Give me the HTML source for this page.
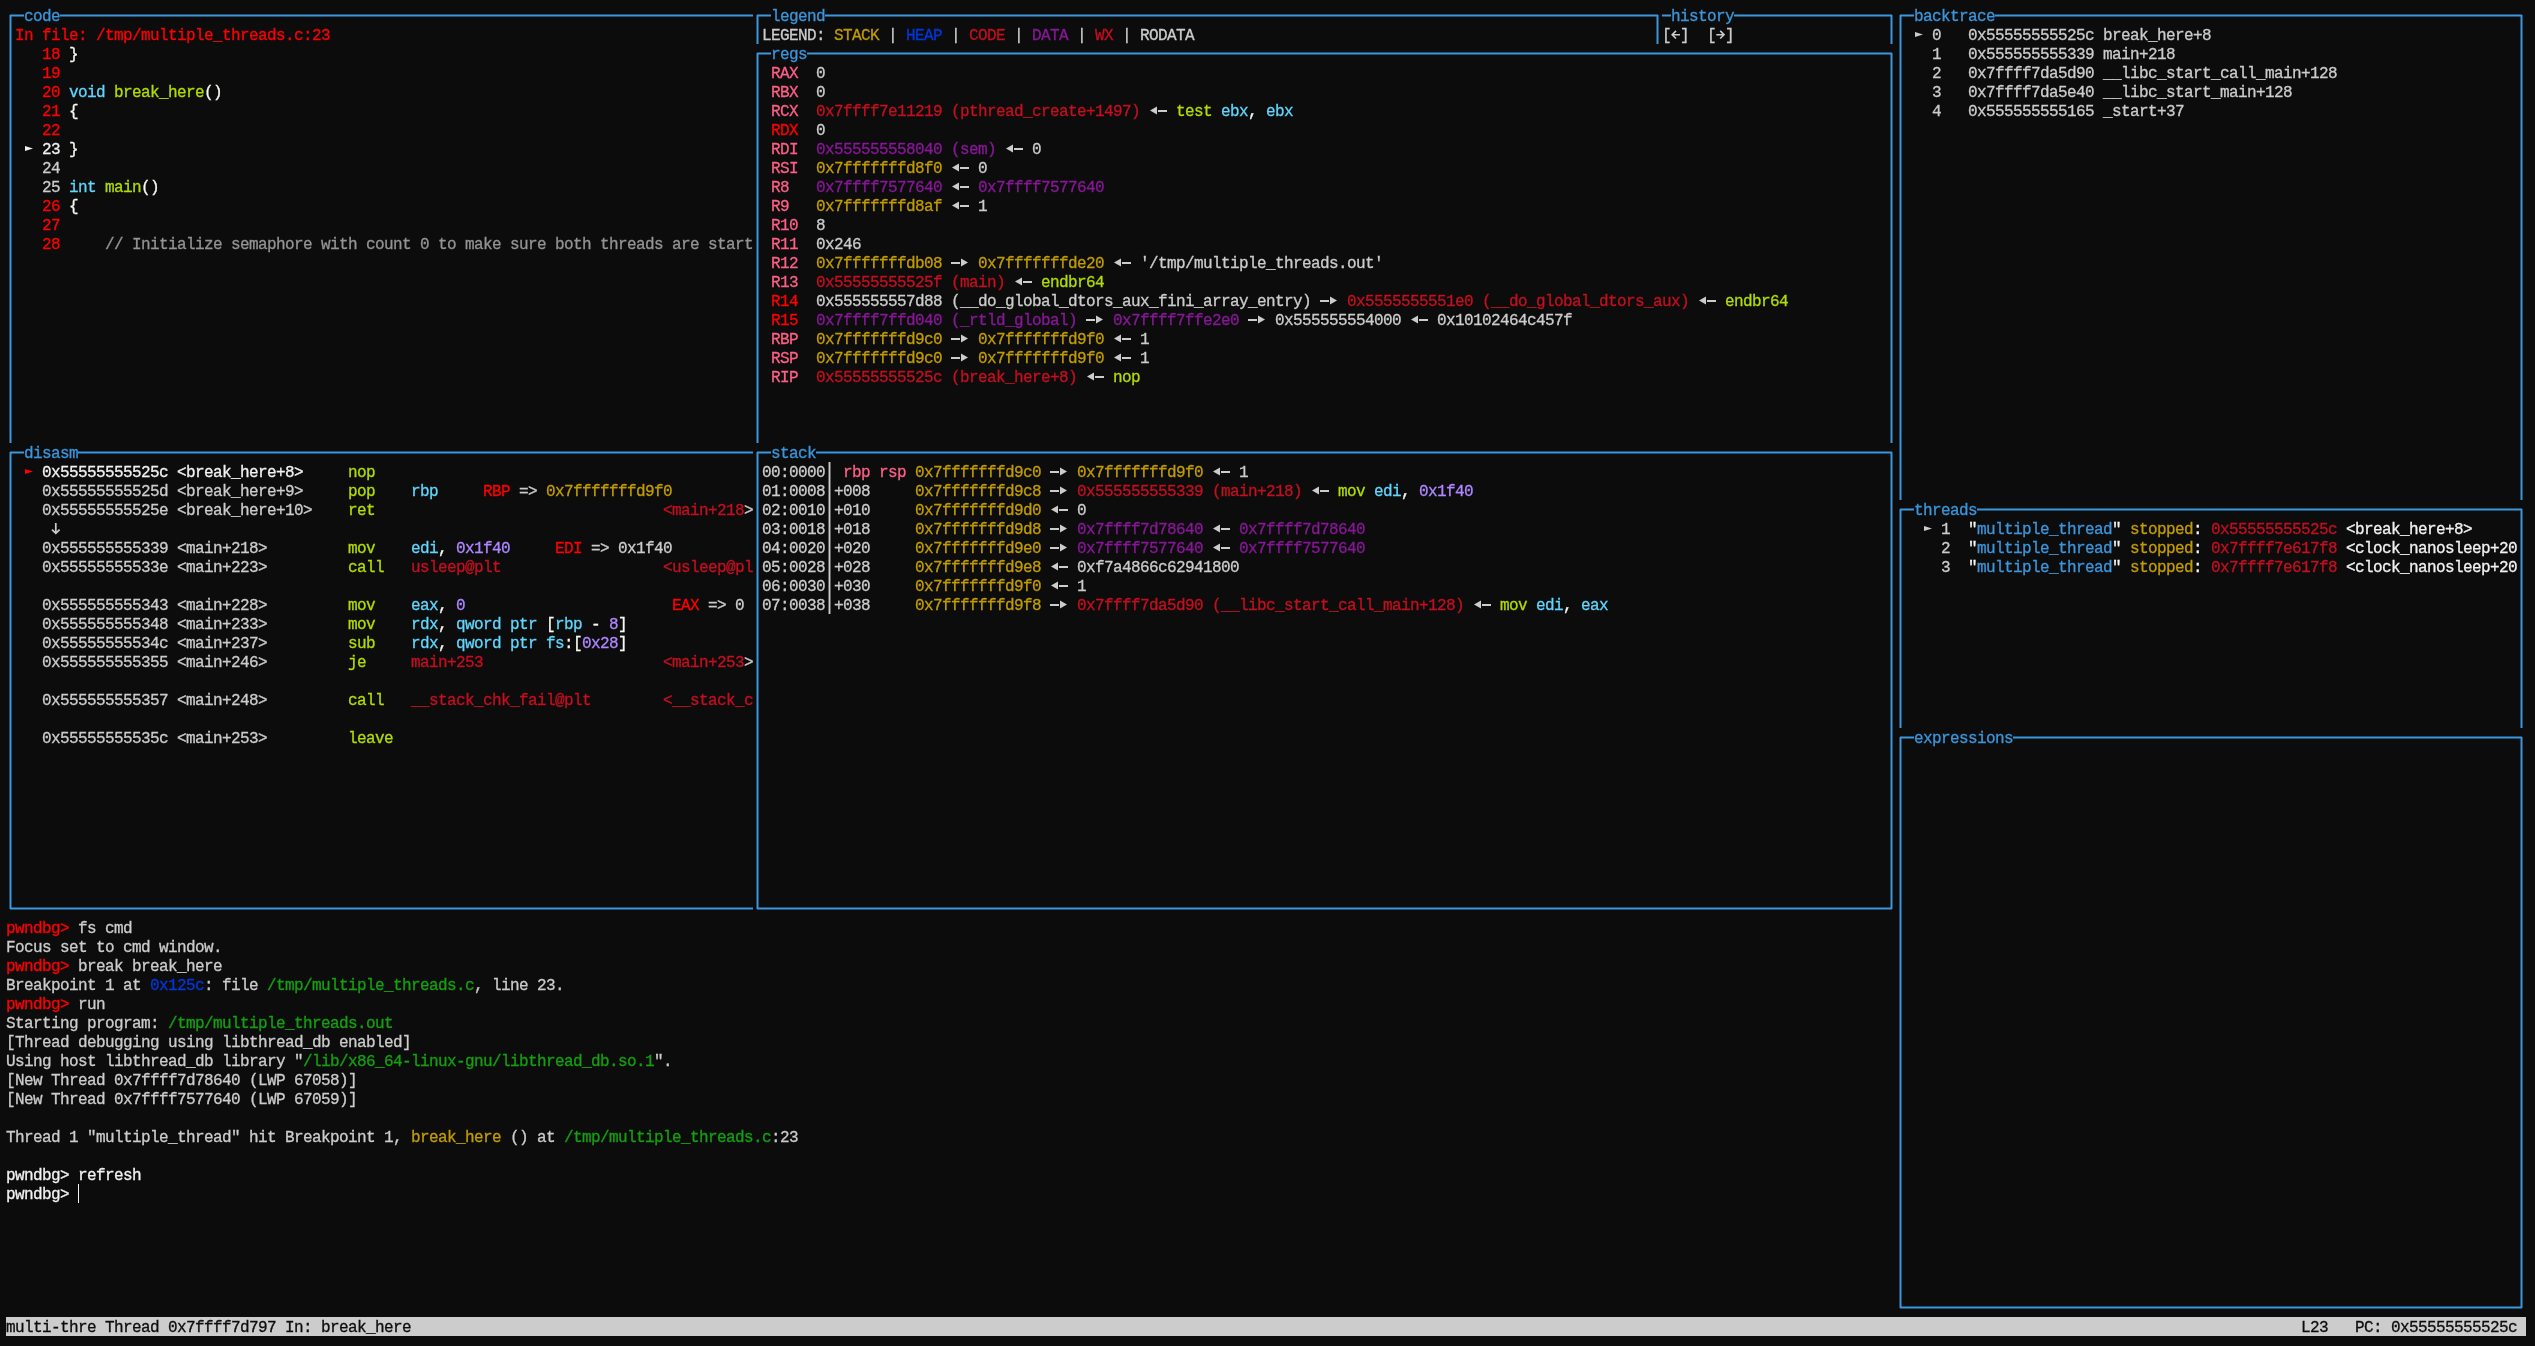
<!DOCTYPE html><html><head><meta charset="utf-8"><style>
html,body{margin:0;padding:0;background:#0c0c0c;width:2535px;height:1346px;overflow:hidden;position:relative}
i,svg,b{position:absolute;display:block}
b{font-weight:normal;font-family:"Liberation Mono",monospace;font-size:16px;line-height:19px;height:19px;white-space:pre;letter-spacing:-0.6016px;-webkit-text-stroke:0.3px currentColor}
b.s{font-weight:bold}
.h{height:3px;background:linear-gradient(rgba(58,150,221,.5) 1px,#3a96dd 1px,#3a96dd 2px,rgba(58,150,221,.5) 2px)}
.v{width:3px;background:linear-gradient(90deg,rgba(58,150,221,.5) 1px,#3a96dd 1px,#3a96dd 2px,rgba(58,150,221,.5) 2px)}
#w{position:absolute;left:0;top:0;width:2535px;height:1346px;will-change:transform}
</style></head><body><div id="w">
<i style="left:6px;top:1317px;width:2520px;height:19px;background:#cccccc"></i>
<i class="h" style="left:10px;top:14px;width:14px"></i>
<i class="h" style="left:60px;top:14px;width:693px"></i>
<i class="v" style="left:9px;top:15px;height:428px"></i>
<i class="h" style="left:757px;top:14px;width:14px"></i>
<i class="h" style="left:825px;top:14px;width:833px"></i>
<i class="v" style="left:756px;top:15px;height:29px"></i>
<i class="v" style="left:1656px;top:15px;height:29px"></i>
<i class="h" style="left:1662px;top:14px;width:9px"></i>
<i class="h" style="left:1734px;top:14px;width:158px"></i>
<i class="v" style="left:1890px;top:15px;height:29px"></i>
<i class="h" style="left:757px;top:52px;width:14px"></i>
<i class="h" style="left:807px;top:52px;width:1085px"></i>
<i class="v" style="left:756px;top:53px;height:390px"></i>
<i class="v" style="left:1890px;top:53px;height:390px"></i>
<i class="h" style="left:1900px;top:14px;width:14px"></i>
<i class="h" style="left:1995px;top:14px;width:527px"></i>
<i class="v" style="left:1899px;top:15px;height:485px"></i>
<i class="v" style="left:2520px;top:15px;height:485px"></i>
<i class="h" style="left:10px;top:451px;width:14px"></i>
<i class="h" style="left:78px;top:451px;width:675px"></i>
<i class="v" style="left:9px;top:452px;height:457px"></i>
<i class="h" style="left:10px;top:907px;width:743px"></i>
<i class="h" style="left:757px;top:451px;width:14px"></i>
<i class="h" style="left:816px;top:451px;width:1076px"></i>
<i class="v" style="left:756px;top:452px;height:457px"></i>
<i class="v" style="left:1890px;top:452px;height:457px"></i>
<i class="h" style="left:757px;top:907px;width:1135px"></i>
<i class="h" style="left:1900px;top:508px;width:14px"></i>
<i class="h" style="left:1977px;top:508px;width:545px"></i>
<i class="v" style="left:1899px;top:509px;height:219px"></i>
<i class="v" style="left:2520px;top:509px;height:219px"></i>
<i class="h" style="left:1900px;top:736px;width:14px"></i>
<i class="h" style="left:2013px;top:736px;width:509px"></i>
<i class="v" style="left:1899px;top:737px;height:571px"></i>
<i class="v" style="left:2520px;top:737px;height:571px"></i>
<i class="h" style="left:1900px;top:1306px;width:622px"></i>
<svg style="left:24px;top:139px" width="9" height="19"><polygon points="1,7 9,9.5 1,12" fill="#f2f2f2"/></svg>
<svg style="left:1671px;top:25px" width="9" height="19"><path d="M9 9.7H1.2M5 5.9L1.2 9.7L5 13.5" stroke="#cccccc" stroke-width="1.6" fill="none"/></svg>
<svg style="left:1716px;top:25px" width="9" height="19"><path d="M0.3 9.7H8M4.2 5.9L8 9.7L4.2 13.5" stroke="#cccccc" stroke-width="1.6" fill="none"/></svg>
<svg style="left:1149px;top:101px" width="9" height="19"><polygon points="8,5.5 1,9.5 8,13.5" fill="#cccccc"/></svg>
<i style="left:1158px;top:110px;width:9px;height:2px;background:#cccccc"></i>
<svg style="left:1005px;top:139px" width="9" height="19"><polygon points="8,5.5 1,9.5 8,13.5" fill="#cccccc"/></svg>
<i style="left:1014px;top:148px;width:9px;height:2px;background:#cccccc"></i>
<svg style="left:951px;top:158px" width="9" height="19"><polygon points="8,5.5 1,9.5 8,13.5" fill="#cccccc"/></svg>
<i style="left:960px;top:167px;width:9px;height:2px;background:#cccccc"></i>
<svg style="left:951px;top:177px" width="9" height="19"><polygon points="8,5.5 1,9.5 8,13.5" fill="#cccccc"/></svg>
<i style="left:960px;top:186px;width:9px;height:2px;background:#cccccc"></i>
<svg style="left:951px;top:196px" width="9" height="19"><polygon points="8,5.5 1,9.5 8,13.5" fill="#cccccc"/></svg>
<i style="left:960px;top:205px;width:9px;height:2px;background:#cccccc"></i>
<i style="left:951px;top:262px;width:9px;height:2px;background:#cccccc"></i>
<svg style="left:960px;top:253px" width="9" height="19"><polygon points="1,5.5 8,9.5 1,13.5" fill="#cccccc"/></svg>
<svg style="left:1113px;top:253px" width="9" height="19"><polygon points="8,5.5 1,9.5 8,13.5" fill="#cccccc"/></svg>
<i style="left:1122px;top:262px;width:9px;height:2px;background:#cccccc"></i>
<svg style="left:1014px;top:272px" width="9" height="19"><polygon points="8,5.5 1,9.5 8,13.5" fill="#cccccc"/></svg>
<i style="left:1023px;top:281px;width:9px;height:2px;background:#cccccc"></i>
<i style="left:1320px;top:300px;width:9px;height:2px;background:#cccccc"></i>
<svg style="left:1329px;top:291px" width="9" height="19"><polygon points="1,5.5 8,9.5 1,13.5" fill="#cccccc"/></svg>
<svg style="left:1698px;top:291px" width="9" height="19"><polygon points="8,5.5 1,9.5 8,13.5" fill="#cccccc"/></svg>
<i style="left:1707px;top:300px;width:9px;height:2px;background:#cccccc"></i>
<i style="left:1086px;top:319px;width:9px;height:2px;background:#cccccc"></i>
<svg style="left:1095px;top:310px" width="9" height="19"><polygon points="1,5.5 8,9.5 1,13.5" fill="#cccccc"/></svg>
<i style="left:1248px;top:319px;width:9px;height:2px;background:#cccccc"></i>
<svg style="left:1257px;top:310px" width="9" height="19"><polygon points="1,5.5 8,9.5 1,13.5" fill="#cccccc"/></svg>
<svg style="left:1410px;top:310px" width="9" height="19"><polygon points="8,5.5 1,9.5 8,13.5" fill="#cccccc"/></svg>
<i style="left:1419px;top:319px;width:9px;height:2px;background:#cccccc"></i>
<i style="left:951px;top:338px;width:9px;height:2px;background:#cccccc"></i>
<svg style="left:960px;top:329px" width="9" height="19"><polygon points="1,5.5 8,9.5 1,13.5" fill="#cccccc"/></svg>
<svg style="left:1113px;top:329px" width="9" height="19"><polygon points="8,5.5 1,9.5 8,13.5" fill="#cccccc"/></svg>
<i style="left:1122px;top:338px;width:9px;height:2px;background:#cccccc"></i>
<i style="left:951px;top:357px;width:9px;height:2px;background:#cccccc"></i>
<svg style="left:960px;top:348px" width="9" height="19"><polygon points="1,5.5 8,9.5 1,13.5" fill="#cccccc"/></svg>
<svg style="left:1113px;top:348px" width="9" height="19"><polygon points="8,5.5 1,9.5 8,13.5" fill="#cccccc"/></svg>
<i style="left:1122px;top:357px;width:9px;height:2px;background:#cccccc"></i>
<svg style="left:1086px;top:367px" width="9" height="19"><polygon points="8,5.5 1,9.5 8,13.5" fill="#cccccc"/></svg>
<i style="left:1095px;top:376px;width:9px;height:2px;background:#cccccc"></i>
<svg style="left:1914px;top:25px" width="9" height="19"><polygon points="1,7 9,9.5 1,12" fill="#cccccc"/></svg>
<svg style="left:24px;top:462px" width="9" height="19"><polygon points="1,7 9,9.5 1,12" fill="#ff0000"/></svg>
<svg style="left:51px;top:519px" width="9" height="19"><path d="M4.8 4V14.2M1 10.6L4.8 14.4L8.6 10.6" stroke="#cccccc" stroke-width="1.7" fill="none"/></svg>
<i style="left:828px;top:462px;width:3px;height:19px;background:linear-gradient(90deg,rgba(204,204,204,.45) 1px,#cccccc 1px,#cccccc 2px,rgba(204,204,204,.45) 2px)"></i>
<i style="left:1050px;top:471px;width:9px;height:2px;background:#cccccc"></i>
<svg style="left:1059px;top:462px" width="9" height="19"><polygon points="1,5.5 8,9.5 1,13.5" fill="#cccccc"/></svg>
<svg style="left:1212px;top:462px" width="9" height="19"><polygon points="8,5.5 1,9.5 8,13.5" fill="#cccccc"/></svg>
<i style="left:1221px;top:471px;width:9px;height:2px;background:#cccccc"></i>
<i style="left:828px;top:481px;width:3px;height:19px;background:linear-gradient(90deg,rgba(204,204,204,.45) 1px,#cccccc 1px,#cccccc 2px,rgba(204,204,204,.45) 2px)"></i>
<i style="left:1050px;top:490px;width:9px;height:2px;background:#cccccc"></i>
<svg style="left:1059px;top:481px" width="9" height="19"><polygon points="1,5.5 8,9.5 1,13.5" fill="#cccccc"/></svg>
<svg style="left:1311px;top:481px" width="9" height="19"><polygon points="8,5.5 1,9.5 8,13.5" fill="#cccccc"/></svg>
<i style="left:1320px;top:490px;width:9px;height:2px;background:#cccccc"></i>
<i style="left:828px;top:500px;width:3px;height:19px;background:linear-gradient(90deg,rgba(204,204,204,.45) 1px,#cccccc 1px,#cccccc 2px,rgba(204,204,204,.45) 2px)"></i>
<svg style="left:1050px;top:500px" width="9" height="19"><polygon points="8,5.5 1,9.5 8,13.5" fill="#cccccc"/></svg>
<i style="left:1059px;top:509px;width:9px;height:2px;background:#cccccc"></i>
<i style="left:828px;top:519px;width:3px;height:19px;background:linear-gradient(90deg,rgba(204,204,204,.45) 1px,#cccccc 1px,#cccccc 2px,rgba(204,204,204,.45) 2px)"></i>
<i style="left:1050px;top:528px;width:9px;height:2px;background:#cccccc"></i>
<svg style="left:1059px;top:519px" width="9" height="19"><polygon points="1,5.5 8,9.5 1,13.5" fill="#cccccc"/></svg>
<svg style="left:1212px;top:519px" width="9" height="19"><polygon points="8,5.5 1,9.5 8,13.5" fill="#cccccc"/></svg>
<i style="left:1221px;top:528px;width:9px;height:2px;background:#cccccc"></i>
<i style="left:828px;top:538px;width:3px;height:19px;background:linear-gradient(90deg,rgba(204,204,204,.45) 1px,#cccccc 1px,#cccccc 2px,rgba(204,204,204,.45) 2px)"></i>
<i style="left:1050px;top:547px;width:9px;height:2px;background:#cccccc"></i>
<svg style="left:1059px;top:538px" width="9" height="19"><polygon points="1,5.5 8,9.5 1,13.5" fill="#cccccc"/></svg>
<svg style="left:1212px;top:538px" width="9" height="19"><polygon points="8,5.5 1,9.5 8,13.5" fill="#cccccc"/></svg>
<i style="left:1221px;top:547px;width:9px;height:2px;background:#cccccc"></i>
<i style="left:828px;top:557px;width:3px;height:19px;background:linear-gradient(90deg,rgba(204,204,204,.45) 1px,#cccccc 1px,#cccccc 2px,rgba(204,204,204,.45) 2px)"></i>
<svg style="left:1050px;top:557px" width="9" height="19"><polygon points="8,5.5 1,9.5 8,13.5" fill="#cccccc"/></svg>
<i style="left:1059px;top:566px;width:9px;height:2px;background:#cccccc"></i>
<i style="left:828px;top:576px;width:3px;height:19px;background:linear-gradient(90deg,rgba(204,204,204,.45) 1px,#cccccc 1px,#cccccc 2px,rgba(204,204,204,.45) 2px)"></i>
<svg style="left:1050px;top:576px" width="9" height="19"><polygon points="8,5.5 1,9.5 8,13.5" fill="#cccccc"/></svg>
<i style="left:1059px;top:585px;width:9px;height:2px;background:#cccccc"></i>
<i style="left:828px;top:595px;width:3px;height:19px;background:linear-gradient(90deg,rgba(204,204,204,.45) 1px,#cccccc 1px,#cccccc 2px,rgba(204,204,204,.45) 2px)"></i>
<i style="left:1050px;top:604px;width:9px;height:2px;background:#cccccc"></i>
<svg style="left:1059px;top:595px" width="9" height="19"><polygon points="1,5.5 8,9.5 1,13.5" fill="#cccccc"/></svg>
<svg style="left:1473px;top:595px" width="9" height="19"><polygon points="8,5.5 1,9.5 8,13.5" fill="#cccccc"/></svg>
<i style="left:1482px;top:604px;width:9px;height:2px;background:#cccccc"></i>
<svg style="left:1923px;top:519px" width="9" height="19"><polygon points="1,7 9,9.5 1,12" fill="#cccccc"/></svg>
<i style="left:78px;top:1184px;width:1px;height:19px;background:#f2f2f2"></i>
<b style="left:24px;top:8px;color:#3a96dd">code</b>
<b style="left:771px;top:8px;color:#3a96dd">legend</b>
<b style="left:1671px;top:8px;color:#3a96dd">history</b>
<b style="left:771px;top:46px;color:#3a96dd">regs</b>
<b style="left:1914px;top:8px;color:#3a96dd">backtrace</b>
<b style="left:24px;top:445px;color:#3a96dd">disasm</b>
<b style="left:771px;top:445px;color:#3a96dd">stack</b>
<b style="left:1914px;top:502px;color:#3a96dd">threads</b>
<b style="left:1914px;top:730px;color:#3a96dd">expressions</b>
<b style="left:15px;top:27px;color:#ff0000">In file: /tmp/multiple_threads.c:23</b>
<b style="left:42px;top:46px;color:#ff0000">18</b>
<b style="left:60px;top:46px;color:#cccccc"> </b>
<b style="left:69px;top:46px;color:#f8f8f2">}</b>
<b style="left:42px;top:65px;color:#ff0000">19</b>
<b style="left:42px;top:84px;color:#ff0000">20</b>
<b style="left:60px;top:84px;color:#cccccc"> </b>
<b style="left:69px;top:84px;color:#5fd7ff">void</b>
<b style="left:105px;top:84px;color:#cccccc"> </b>
<b style="left:114px;top:84px;color:#b2dc00">break_here</b>
<b style="left:204px;top:84px;color:#f8f8f2">()</b>
<b style="left:42px;top:103px;color:#ff0000">21</b>
<b style="left:60px;top:103px;color:#cccccc"> </b>
<b style="left:69px;top:103px;color:#f8f8f2">{</b>
<b style="left:42px;top:122px;color:#ff0000">22</b>
<b style="left:33px;top:141px;color:#cccccc"> </b>
<b style="left:42px;top:141px;color:#f2f2f2">23</b>
<b style="left:60px;top:141px;color:#cccccc"> </b>
<b style="left:69px;top:141px;color:#f8f8f2">}</b>
<b style="left:42px;top:160px;color:#cccccc">24</b>
<b style="left:42px;top:179px;color:#cccccc">25</b>
<b style="left:60px;top:179px;color:#cccccc"> </b>
<b style="left:69px;top:179px;color:#5fd7ff">int</b>
<b style="left:96px;top:179px;color:#cccccc"> </b>
<b style="left:105px;top:179px;color:#b2dc00">main</b>
<b style="left:141px;top:179px;color:#f8f8f2">()</b>
<b style="left:42px;top:198px;color:#ff0000">26</b>
<b style="left:60px;top:198px;color:#cccccc"> </b>
<b style="left:69px;top:198px;color:#f8f8f2">{</b>
<b style="left:42px;top:217px;color:#ff0000">27</b>
<b style="left:42px;top:236px;color:#ff0000">28</b>
<b style="left:60px;top:236px;color:#cccccc">     </b>
<b style="left:105px;top:236px;color:#949494">// Initialize semaphore with count 0 to make sure both threads are start</b>
<b style="left:762px;top:27px;color:#cccccc">LEGEND: </b>
<b style="left:834px;top:27px;color:#c19c00">STACK</b>
<b style="left:879px;top:27px;color:#cccccc"> | </b>
<b style="left:906px;top:27px;color:#0037da">HEAP</b>
<b style="left:942px;top:27px;color:#cccccc"> | </b>
<b style="left:969px;top:27px;color:#c50f1f">CODE</b>
<b style="left:1005px;top:27px;color:#cccccc"> | </b>
<b style="left:1032px;top:27px;color:#881798">DATA</b>
<b style="left:1068px;top:27px;color:#cccccc"> | </b>
<b style="left:1095px;top:27px;color:#c50f1f">WX</b>
<b style="left:1113px;top:27px;color:#cccccc"> | </b>
<b style="left:1140px;top:27px;color:#cccccc">RODATA</b>
<b style="left:1662px;top:27px;color:#cccccc">[</b>
<b style="left:1680px;top:27px;color:#cccccc">]  [</b>
<b style="left:1725px;top:27px;color:#cccccc">]</b>
<b style="left:771px;top:65px;color:#ff5f87">RAX</b>
<b style="left:798px;top:65px;color:#cccccc">  </b>
<b style="left:816px;top:65px;color:#cccccc">0</b>
<b style="left:771px;top:84px;color:#ff5f87">RBX</b>
<b style="left:798px;top:84px;color:#cccccc">  </b>
<b style="left:816px;top:84px;color:#cccccc">0</b>
<b style="left:771px;top:103px;color:#ff5f87">RCX</b>
<b style="left:798px;top:103px;color:#cccccc">  </b>
<b style="left:816px;top:103px;color:#c50f1f">0x7ffff7e11219 (pthread_create+1497)</b>
<b style="left:1140px;top:103px;color:#cccccc"> </b>
<b style="left:1167px;top:103px;color:#cccccc"> </b>
<b style="left:1176px;top:103px;color:#b2dc00">test</b>
<b style="left:1212px;top:103px;color:#cccccc"> </b>
<b style="left:1221px;top:103px;color:#5fd7ff">ebx</b>
<b style="left:1248px;top:103px;color:#f8f8f2">,</b>
<b style="left:1257px;top:103px;color:#cccccc"> </b>
<b style="left:1266px;top:103px;color:#5fd7ff">ebx</b>
<b style="left:771px;top:122px;color:#ff0000">RDX</b>
<b style="left:798px;top:122px;color:#cccccc">  </b>
<b style="left:816px;top:122px;color:#cccccc">0</b>
<b style="left:771px;top:141px;color:#ff5f87">RDI</b>
<b style="left:798px;top:141px;color:#cccccc">  </b>
<b style="left:816px;top:141px;color:#881798">0x555555558040 (sem)</b>
<b style="left:996px;top:141px;color:#cccccc"> </b>
<b style="left:1023px;top:141px;color:#cccccc"> 0</b>
<b style="left:771px;top:160px;color:#ff5f87">RSI</b>
<b style="left:798px;top:160px;color:#cccccc">  </b>
<b style="left:816px;top:160px;color:#c19c00">0x7fffffffd8f0</b>
<b style="left:942px;top:160px;color:#cccccc"> </b>
<b style="left:969px;top:160px;color:#cccccc"> 0</b>
<b style="left:771px;top:179px;color:#ff5f87">R8 </b>
<b style="left:798px;top:179px;color:#cccccc">  </b>
<b style="left:816px;top:179px;color:#881798">0x7ffff7577640</b>
<b style="left:942px;top:179px;color:#cccccc"> </b>
<b style="left:969px;top:179px;color:#cccccc"> </b>
<b style="left:978px;top:179px;color:#881798">0x7ffff7577640</b>
<b style="left:771px;top:198px;color:#ff5f87">R9 </b>
<b style="left:798px;top:198px;color:#cccccc">  </b>
<b style="left:816px;top:198px;color:#c19c00">0x7fffffffd8af</b>
<b style="left:942px;top:198px;color:#cccccc"> </b>
<b style="left:969px;top:198px;color:#cccccc"> 1</b>
<b style="left:771px;top:217px;color:#ff5f87">R10</b>
<b style="left:798px;top:217px;color:#cccccc">  </b>
<b style="left:816px;top:217px;color:#cccccc">8</b>
<b style="left:771px;top:236px;color:#ff5f87">R11</b>
<b style="left:798px;top:236px;color:#cccccc">  </b>
<b style="left:816px;top:236px;color:#cccccc">0x246</b>
<b style="left:771px;top:255px;color:#ff5f87">R12</b>
<b style="left:798px;top:255px;color:#cccccc">  </b>
<b style="left:816px;top:255px;color:#c19c00">0x7fffffffdb08</b>
<b style="left:942px;top:255px;color:#cccccc"> </b>
<b style="left:969px;top:255px;color:#cccccc"> </b>
<b style="left:978px;top:255px;color:#c19c00">0x7fffffffde20</b>
<b style="left:1104px;top:255px;color:#cccccc"> </b>
<b style="left:1131px;top:255px;color:#cccccc"> &#x27;/tmp/multiple_threads.out&#x27;</b>
<b style="left:771px;top:274px;color:#ff5f87">R13</b>
<b style="left:798px;top:274px;color:#cccccc">  </b>
<b style="left:816px;top:274px;color:#c50f1f">0x55555555525f (main)</b>
<b style="left:1005px;top:274px;color:#cccccc"> </b>
<b style="left:1032px;top:274px;color:#cccccc"> </b>
<b style="left:1041px;top:274px;color:#b2dc00">endbr64</b>
<b style="left:771px;top:293px;color:#ff0000">R14</b>
<b style="left:798px;top:293px;color:#cccccc">  </b>
<b style="left:816px;top:293px;color:#cccccc">0x555555557d88 (__do_global_dtors_aux_fini_array_entry)</b>
<b style="left:1311px;top:293px;color:#cccccc"> </b>
<b style="left:1338px;top:293px;color:#cccccc"> </b>
<b style="left:1347px;top:293px;color:#c50f1f">0x5555555551e0 (__do_global_dtors_aux)</b>
<b style="left:1689px;top:293px;color:#cccccc"> </b>
<b style="left:1716px;top:293px;color:#cccccc"> </b>
<b style="left:1725px;top:293px;color:#b2dc00">endbr64</b>
<b style="left:771px;top:312px;color:#ff0000">R15</b>
<b style="left:798px;top:312px;color:#cccccc">  </b>
<b style="left:816px;top:312px;color:#881798">0x7ffff7ffd040 (_rtld_global)</b>
<b style="left:1077px;top:312px;color:#cccccc"> </b>
<b style="left:1104px;top:312px;color:#cccccc"> </b>
<b style="left:1113px;top:312px;color:#881798">0x7ffff7ffe2e0</b>
<b style="left:1239px;top:312px;color:#cccccc"> </b>
<b style="left:1266px;top:312px;color:#cccccc"> 0x555555554000 </b>
<b style="left:1428px;top:312px;color:#cccccc"> 0x10102464c457f</b>
<b style="left:771px;top:331px;color:#ff5f87">RBP</b>
<b style="left:798px;top:331px;color:#cccccc">  </b>
<b style="left:816px;top:331px;color:#c19c00">0x7fffffffd9c0</b>
<b style="left:942px;top:331px;color:#cccccc"> </b>
<b style="left:969px;top:331px;color:#cccccc"> </b>
<b style="left:978px;top:331px;color:#c19c00">0x7fffffffd9f0</b>
<b style="left:1104px;top:331px;color:#cccccc"> </b>
<b style="left:1131px;top:331px;color:#cccccc"> 1</b>
<b style="left:771px;top:350px;color:#ff5f87">RSP</b>
<b style="left:798px;top:350px;color:#cccccc">  </b>
<b style="left:816px;top:350px;color:#c19c00">0x7fffffffd9c0</b>
<b style="left:942px;top:350px;color:#cccccc"> </b>
<b style="left:969px;top:350px;color:#cccccc"> </b>
<b style="left:978px;top:350px;color:#c19c00">0x7fffffffd9f0</b>
<b style="left:1104px;top:350px;color:#cccccc"> </b>
<b style="left:1131px;top:350px;color:#cccccc"> 1</b>
<b style="left:771px;top:369px;color:#ff5f87">RIP</b>
<b style="left:798px;top:369px;color:#cccccc">  </b>
<b style="left:816px;top:369px;color:#c50f1f">0x55555555525c (break_here+8)</b>
<b style="left:1077px;top:369px;color:#cccccc"> </b>
<b style="left:1104px;top:369px;color:#cccccc"> </b>
<b style="left:1113px;top:369px;color:#b2dc00">nop</b>
<b style="left:1923px;top:27px;color:#cccccc"> 0   0x55555555525c break_here+8</b>
<b style="left:1932px;top:46px;color:#cccccc">1   0x555555555339 main+218</b>
<b style="left:1932px;top:65px;color:#cccccc">2   0x7ffff7da5d90 __libc_start_call_main+128</b>
<b style="left:1932px;top:84px;color:#cccccc">3   0x7ffff7da5e40 __libc_start_main+128</b>
<b style="left:1932px;top:103px;color:#cccccc">4   0x555555555165 _start+37</b>
<b style="left:42px;top:464px;color:#f2f2f2">0x55555555525c &lt;break_here+8&gt;</b>
<b style="left:348px;top:464px;color:#b2dc00">nop</b>
<b style="left:42px;top:483px;color:#cccccc">0x55555555525d &lt;break_here+9&gt;</b>
<b style="left:348px;top:483px;color:#b2dc00">pop</b>
<b style="left:411px;top:483px;color:#5fd7ff">rbp</b>
<b style="left:483px;top:483px;color:#ff0000">RBP</b>
<b style="left:510px;top:483px;color:#cccccc"> =&gt; </b>
<b style="left:546px;top:483px;color:#c19c00">0x7fffffffd9f0</b>
<b style="left:42px;top:502px;color:#cccccc">0x55555555525e &lt;break_here+10&gt;</b>
<b style="left:348px;top:502px;color:#b2dc00">ret</b>
<b style="left:663px;top:502px;color:#c50f1f">&lt;main+218</b>
<b style="left:744px;top:502px;color:#cccccc">&gt;</b>
<b style="left:42px;top:540px;color:#cccccc">0x555555555339 &lt;main+218&gt;</b>
<b style="left:348px;top:540px;color:#b2dc00">mov</b>
<b style="left:411px;top:540px;color:#5fd7ff">edi</b>
<b style="left:438px;top:540px;color:#f8f8f2">,</b>
<b style="left:447px;top:540px;color:#cccccc"> </b>
<b style="left:456px;top:540px;color:#af87ff">0x1f40</b>
<b style="left:555px;top:540px;color:#ff0000">EDI</b>
<b style="left:582px;top:540px;color:#cccccc"> =&gt; 0x1f40</b>
<b style="left:42px;top:559px;color:#cccccc">0x55555555533e &lt;main+223&gt;</b>
<b style="left:348px;top:559px;color:#b2dc00">call</b>
<b style="left:411px;top:559px;color:#c50f1f">usleep@plt</b>
<b style="left:663px;top:559px;color:#c50f1f">&lt;usleep@pl</b>
<b style="left:42px;top:597px;color:#cccccc">0x555555555343 &lt;main+228&gt;</b>
<b style="left:348px;top:597px;color:#b2dc00">mov</b>
<b style="left:411px;top:597px;color:#5fd7ff">eax</b>
<b style="left:438px;top:597px;color:#f8f8f2">,</b>
<b style="left:447px;top:597px;color:#cccccc"> </b>
<b style="left:456px;top:597px;color:#af87ff">0</b>
<b style="left:672px;top:597px;color:#ff0000">EAX</b>
<b style="left:699px;top:597px;color:#cccccc"> =&gt; 0</b>
<b style="left:42px;top:616px;color:#cccccc">0x555555555348 &lt;main+233&gt;</b>
<b style="left:348px;top:616px;color:#b2dc00">mov</b>
<b style="left:411px;top:616px;color:#5fd7ff">rdx</b>
<b style="left:438px;top:616px;color:#f8f8f2">,</b>
<b style="left:447px;top:616px;color:#cccccc"> </b>
<b style="left:456px;top:616px;color:#5fd7ff">qword ptr</b>
<b style="left:537px;top:616px;color:#cccccc"> </b>
<b style="left:546px;top:616px;color:#f8f8f2">[</b>
<b style="left:555px;top:616px;color:#5fd7ff">rbp</b>
<b style="left:582px;top:616px;color:#f8f8f2"> - </b>
<b style="left:609px;top:616px;color:#af87ff">8</b>
<b style="left:618px;top:616px;color:#f8f8f2">]</b>
<b style="left:42px;top:635px;color:#cccccc">0x55555555534c &lt;main+237&gt;</b>
<b style="left:348px;top:635px;color:#b2dc00">sub</b>
<b style="left:411px;top:635px;color:#5fd7ff">rdx</b>
<b style="left:438px;top:635px;color:#f8f8f2">,</b>
<b style="left:447px;top:635px;color:#cccccc"> </b>
<b style="left:456px;top:635px;color:#5fd7ff">qword ptr</b>
<b style="left:537px;top:635px;color:#cccccc"> </b>
<b style="left:546px;top:635px;color:#5fd7ff">fs</b>
<b style="left:564px;top:635px;color:#f8f8f2">:</b>
<b style="left:573px;top:635px;color:#f8f8f2">[</b>
<b style="left:582px;top:635px;color:#af87ff">0x28</b>
<b style="left:618px;top:635px;color:#f8f8f2">]</b>
<b style="left:42px;top:654px;color:#cccccc">0x555555555355 &lt;main+246&gt;</b>
<b style="left:348px;top:654px;color:#b2dc00">je</b>
<b style="left:411px;top:654px;color:#c50f1f">main+253</b>
<b style="left:663px;top:654px;color:#c50f1f">&lt;main+253</b>
<b style="left:744px;top:654px;color:#cccccc">&gt;</b>
<b style="left:42px;top:692px;color:#cccccc">0x555555555357 &lt;main+248&gt;</b>
<b style="left:348px;top:692px;color:#b2dc00">call</b>
<b style="left:411px;top:692px;color:#c50f1f">__stack_chk_fail@plt</b>
<b style="left:663px;top:692px;color:#c50f1f">&lt;__stack_c</b>
<b style="left:42px;top:730px;color:#cccccc">0x55555555535c &lt;main+253&gt;</b>
<b style="left:348px;top:730px;color:#b2dc00">leave</b>
<b style="left:762px;top:464px;color:#cccccc">00:0000</b>
<b style="left:834px;top:464px;color:#cccccc"> </b>
<b style="left:843px;top:464px;color:#ff5f87">rbp rsp</b>
<b style="left:906px;top:464px;color:#cccccc"> </b>
<b style="left:915px;top:464px;color:#c19c00">0x7fffffffd9c0</b>
<b style="left:1041px;top:464px;color:#cccccc"> </b>
<b style="left:1068px;top:464px;color:#cccccc"> </b>
<b style="left:1077px;top:464px;color:#c19c00">0x7fffffffd9f0</b>
<b style="left:1203px;top:464px;color:#cccccc"> </b>
<b style="left:1230px;top:464px;color:#cccccc"> 1</b>
<b style="left:762px;top:483px;color:#cccccc">01:0008</b>
<b style="left:834px;top:483px;color:#cccccc">+008     </b>
<b style="left:915px;top:483px;color:#c19c00">0x7fffffffd9c8</b>
<b style="left:1041px;top:483px;color:#cccccc"> </b>
<b style="left:1068px;top:483px;color:#cccccc"> </b>
<b style="left:1077px;top:483px;color:#c50f1f">0x555555555339 (main+218)</b>
<b style="left:1302px;top:483px;color:#cccccc"> </b>
<b style="left:1329px;top:483px;color:#cccccc"> </b>
<b style="left:1338px;top:483px;color:#b2dc00">mov</b>
<b style="left:1365px;top:483px;color:#cccccc"> </b>
<b style="left:1374px;top:483px;color:#5fd7ff">edi</b>
<b style="left:1401px;top:483px;color:#f8f8f2">,</b>
<b style="left:1410px;top:483px;color:#cccccc"> </b>
<b style="left:1419px;top:483px;color:#af87ff">0x1f40</b>
<b style="left:762px;top:502px;color:#cccccc">02:0010</b>
<b style="left:834px;top:502px;color:#cccccc">+010     </b>
<b style="left:915px;top:502px;color:#c19c00">0x7fffffffd9d0</b>
<b style="left:1041px;top:502px;color:#cccccc"> </b>
<b style="left:1068px;top:502px;color:#cccccc"> 0</b>
<b style="left:762px;top:521px;color:#cccccc">03:0018</b>
<b style="left:834px;top:521px;color:#cccccc">+018     </b>
<b style="left:915px;top:521px;color:#c19c00">0x7fffffffd9d8</b>
<b style="left:1041px;top:521px;color:#cccccc"> </b>
<b style="left:1068px;top:521px;color:#cccccc"> </b>
<b style="left:1077px;top:521px;color:#881798">0x7ffff7d78640</b>
<b style="left:1203px;top:521px;color:#cccccc"> </b>
<b style="left:1230px;top:521px;color:#cccccc"> </b>
<b style="left:1239px;top:521px;color:#881798">0x7ffff7d78640</b>
<b style="left:762px;top:540px;color:#cccccc">04:0020</b>
<b style="left:834px;top:540px;color:#cccccc">+020     </b>
<b style="left:915px;top:540px;color:#c19c00">0x7fffffffd9e0</b>
<b style="left:1041px;top:540px;color:#cccccc"> </b>
<b style="left:1068px;top:540px;color:#cccccc"> </b>
<b style="left:1077px;top:540px;color:#881798">0x7ffff7577640</b>
<b style="left:1203px;top:540px;color:#cccccc"> </b>
<b style="left:1230px;top:540px;color:#cccccc"> </b>
<b style="left:1239px;top:540px;color:#881798">0x7ffff7577640</b>
<b style="left:762px;top:559px;color:#cccccc">05:0028</b>
<b style="left:834px;top:559px;color:#cccccc">+028     </b>
<b style="left:915px;top:559px;color:#c19c00">0x7fffffffd9e8</b>
<b style="left:1041px;top:559px;color:#cccccc"> </b>
<b style="left:1068px;top:559px;color:#cccccc"> 0xf7a4866c62941800</b>
<b style="left:762px;top:578px;color:#cccccc">06:0030</b>
<b style="left:834px;top:578px;color:#cccccc">+030     </b>
<b style="left:915px;top:578px;color:#c19c00">0x7fffffffd9f0</b>
<b style="left:1041px;top:578px;color:#cccccc"> </b>
<b style="left:1068px;top:578px;color:#cccccc"> 1</b>
<b style="left:762px;top:597px;color:#cccccc">07:0038</b>
<b style="left:834px;top:597px;color:#cccccc">+038     </b>
<b style="left:915px;top:597px;color:#c19c00">0x7fffffffd9f8</b>
<b style="left:1041px;top:597px;color:#cccccc"> </b>
<b style="left:1068px;top:597px;color:#cccccc"> </b>
<b style="left:1077px;top:597px;color:#c50f1f">0x7ffff7da5d90 (__libc_start_call_main+128)</b>
<b style="left:1464px;top:597px;color:#cccccc"> </b>
<b style="left:1491px;top:597px;color:#cccccc"> </b>
<b style="left:1500px;top:597px;color:#b2dc00">mov</b>
<b style="left:1527px;top:597px;color:#cccccc"> </b>
<b style="left:1536px;top:597px;color:#5fd7ff">edi</b>
<b style="left:1563px;top:597px;color:#f8f8f2">,</b>
<b style="left:1572px;top:597px;color:#cccccc"> </b>
<b style="left:1581px;top:597px;color:#5fd7ff">eax</b>
<b style="left:1932px;top:521px;color:#cccccc"> 1  </b>
<b style="left:1968px;top:521px;color:#f8f8f2">&quot;</b>
<b style="left:1977px;top:521px;color:#3a96dd">multiple_thread</b>
<b style="left:2112px;top:521px;color:#f8f8f2">&quot;</b>
<b style="left:2121px;top:521px;color:#cccccc"> </b>
<b style="left:2130px;top:521px;color:#c19c00">stopped</b>
<b style="left:2193px;top:521px;color:#f8f8f2">:</b>
<b style="left:2202px;top:521px;color:#cccccc"> </b>
<b style="left:2211px;top:521px;color:#c50f1f">0x55555555525c</b>
<b style="left:2337px;top:521px;color:#cccccc"> </b>
<b style="left:2346px;top:521px;color:#f2f2f2">&lt;break_here+8&gt;</b>
<b style="left:1941px;top:540px;color:#cccccc">2  </b>
<b style="left:1968px;top:540px;color:#f8f8f2">&quot;</b>
<b style="left:1977px;top:540px;color:#3a96dd">multiple_thread</b>
<b style="left:2112px;top:540px;color:#f8f8f2">&quot;</b>
<b style="left:2121px;top:540px;color:#cccccc"> </b>
<b style="left:2130px;top:540px;color:#c19c00">stopped</b>
<b style="left:2193px;top:540px;color:#f8f8f2">:</b>
<b style="left:2202px;top:540px;color:#cccccc"> </b>
<b style="left:2211px;top:540px;color:#c50f1f">0x7ffff7e617f8</b>
<b style="left:2337px;top:540px;color:#cccccc"> </b>
<b style="left:2346px;top:540px;color:#f2f2f2">&lt;clock_nanosleep+20</b>
<b style="left:1941px;top:559px;color:#cccccc">3  </b>
<b style="left:1968px;top:559px;color:#f8f8f2">&quot;</b>
<b style="left:1977px;top:559px;color:#3a96dd">multiple_thread</b>
<b style="left:2112px;top:559px;color:#f8f8f2">&quot;</b>
<b style="left:2121px;top:559px;color:#cccccc"> </b>
<b style="left:2130px;top:559px;color:#c19c00">stopped</b>
<b style="left:2193px;top:559px;color:#f8f8f2">:</b>
<b style="left:2202px;top:559px;color:#cccccc"> </b>
<b style="left:2211px;top:559px;color:#c50f1f">0x7ffff7e617f8</b>
<b style="left:2337px;top:559px;color:#cccccc"> </b>
<b style="left:2346px;top:559px;color:#f2f2f2">&lt;clock_nanosleep+20</b>
<b style="left:6px;top:920px;color:#ff0000">pwndbg&gt; </b>
<b style="left:78px;top:920px;color:#cccccc">fs cmd</b>
<b style="left:6px;top:939px;color:#cccccc">Focus set to cmd window.</b>
<b style="left:6px;top:958px;color:#ff0000">pwndbg&gt; </b>
<b style="left:78px;top:958px;color:#cccccc">break break_here</b>
<b style="left:6px;top:977px;color:#cccccc">Breakpoint 1 at </b>
<b style="left:150px;top:977px;color:#0037da">0x125c</b>
<b style="left:204px;top:977px;color:#cccccc">: file </b>
<b style="left:267px;top:977px;color:#13a10e">/tmp/multiple_threads.c</b>
<b style="left:474px;top:977px;color:#cccccc">, line 23.</b>
<b style="left:6px;top:996px;color:#ff0000">pwndbg&gt; </b>
<b style="left:78px;top:996px;color:#cccccc">run</b>
<b style="left:6px;top:1015px;color:#cccccc">Starting program: </b>
<b style="left:168px;top:1015px;color:#13a10e">/tmp/multiple_threads.out</b>
<b style="left:6px;top:1034px;color:#cccccc">[Thread debugging using libthread_db enabled]</b>
<b style="left:6px;top:1053px;color:#cccccc">Using host libthread_db library &quot;</b>
<b style="left:303px;top:1053px;color:#13a10e">/lib/x86_64-linux-gnu/libthread_db.so.1</b>
<b style="left:654px;top:1053px;color:#cccccc">&quot;.</b>
<b style="left:6px;top:1072px;color:#cccccc">[New Thread 0x7ffff7d78640 (LWP 67058)]</b>
<b style="left:6px;top:1091px;color:#cccccc">[New Thread 0x7ffff7577640 (LWP 67059)]</b>
<b style="left:6px;top:1129px;color:#cccccc">Thread 1 &quot;multiple_thread&quot; hit Breakpoint 1, </b>
<b style="left:411px;top:1129px;color:#c19c00">break_here</b>
<b style="left:501px;top:1129px;color:#cccccc"> () at </b>
<b style="left:564px;top:1129px;color:#13a10e">/tmp/multiple_threads.c</b>
<b style="left:771px;top:1129px;color:#cccccc">:23</b>
<b style="left:6px;top:1167px;color:#f2f2f2">pwndbg&gt; refresh</b>
<b style="left:6px;top:1186px;color:#f2f2f2">pwndbg&gt; </b>
<b style="left:6px;top:1319px;color:#0c0c0c">multi-thre Thread 0x7ffff7d797 In: break_here</b>
<b style="left:2301px;top:1319px;color:#0c0c0c">L23</b>
<b style="left:2355px;top:1319px;color:#0c0c0c">PC: 0x55555555525c</b>
</div></body></html>
